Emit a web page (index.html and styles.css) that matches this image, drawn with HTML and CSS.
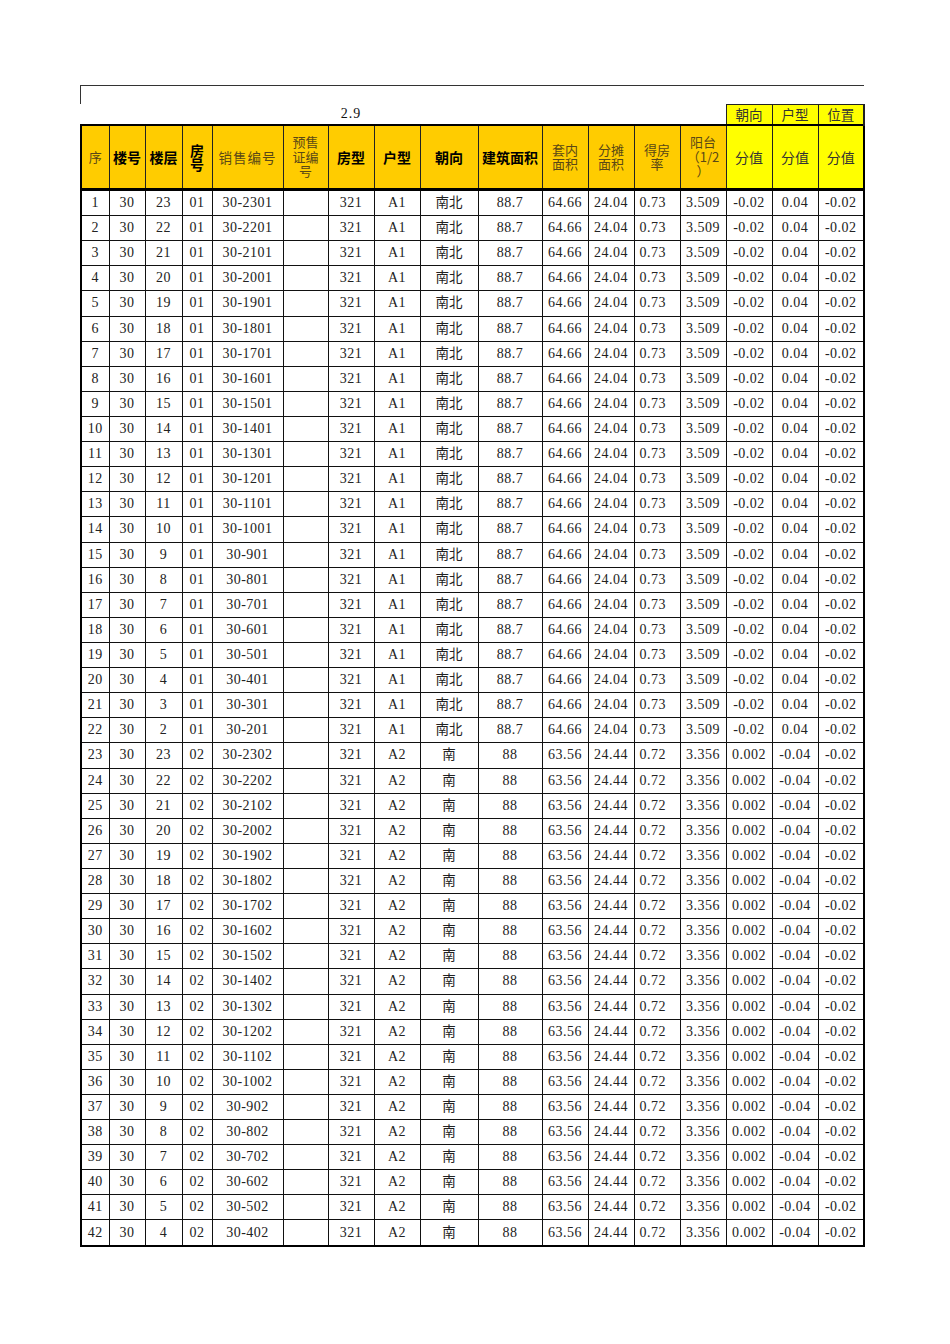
FILE: index.html
```html
<!DOCTYPE html>
<html lang="zh-CN">
<head>
<meta charset="utf-8">
<title>销售表</title>
<link rel="stylesheet" href="styles.css">
</head>
<body>
<div class="page">
  <div class="title-box"></div>
  <table class="sheet">
    <colgroup>
      <col class="c28"><col class="c36"><col class="c37"><col class="c30"><col class="c71"><col class="c45"><col class="c46"><col class="c46"><col class="c58"><col class="c64"><col class="c46"><col class="c46"><col class="c46"><col class="c46"><col class="c46"><col class="c46"><col class="c46">
    </colgroup>
    <thead>
      <tr class="pre">
        <td></td><td></td><td></td><td></td><td></td><td></td><td class="ratio">2.9</td><td></td><td></td><td></td><td></td><td></td><td></td><td></td>
        <td class="ylw">朝向</td><td class="ylw">户型</td><td class="ylw last">位置</td>
      </tr>
      <tr class="head">
        <th class="lt first">序</th>
        <th class="bd">楼号</th>
        <th class="bd">楼层</th>
        <th class="bd">房<br>号</th>
        <th class="lt sp">销售编号</th>
        <th class="lt">预售<br>证编<br>号</th>
        <th class="bd">房型</th>
        <th class="bd">户型</th>
        <th class="bd">朝向</th>
        <th class="bd">建筑面积</th>
        <th class="lt">套内<br>面积</th>
        <th class="lt">分摊<br>面积</th>
        <th class="lt">得房<br>率</th>
        <th class="lt">阳台<br>（1/2<br>）</th>
        <th class="lt y">分值</th>
        <th class="lt y">分值</th>
        <th class="lt y last">分值</th>
      </tr>
    </thead>
    <tbody>
      <tr><td class="first">1</td><td>30</td><td>23</td><td>01</td><td>30-2301</td><td></td><td>321</td><td>A1</td><td class="cj">南北</td><td>88.7</td><td>64.66</td><td>24.04</td><td class="l">0.73</td><td>3.509</td><td>-0.02</td><td>0.04</td><td class="last">-0.02</td></tr>
      <tr><td class="first">2</td><td>30</td><td>22</td><td>01</td><td>30-2201</td><td></td><td>321</td><td>A1</td><td class="cj">南北</td><td>88.7</td><td>64.66</td><td>24.04</td><td class="l">0.73</td><td>3.509</td><td>-0.02</td><td>0.04</td><td class="last">-0.02</td></tr>
      <tr><td class="first">3</td><td>30</td><td>21</td><td>01</td><td>30-2101</td><td></td><td>321</td><td>A1</td><td class="cj">南北</td><td>88.7</td><td>64.66</td><td>24.04</td><td class="l">0.73</td><td>3.509</td><td>-0.02</td><td>0.04</td><td class="last">-0.02</td></tr>
      <tr><td class="first">4</td><td>30</td><td>20</td><td>01</td><td>30-2001</td><td></td><td>321</td><td>A1</td><td class="cj">南北</td><td>88.7</td><td>64.66</td><td>24.04</td><td class="l">0.73</td><td>3.509</td><td>-0.02</td><td>0.04</td><td class="last">-0.02</td></tr>
      <tr><td class="first">5</td><td>30</td><td>19</td><td>01</td><td>30-1901</td><td></td><td>321</td><td>A1</td><td class="cj">南北</td><td>88.7</td><td>64.66</td><td>24.04</td><td class="l">0.73</td><td>3.509</td><td>-0.02</td><td>0.04</td><td class="last">-0.02</td></tr>
      <tr><td class="first">6</td><td>30</td><td>18</td><td>01</td><td>30-1801</td><td></td><td>321</td><td>A1</td><td class="cj">南北</td><td>88.7</td><td>64.66</td><td>24.04</td><td class="l">0.73</td><td>3.509</td><td>-0.02</td><td>0.04</td><td class="last">-0.02</td></tr>
      <tr><td class="first">7</td><td>30</td><td>17</td><td>01</td><td>30-1701</td><td></td><td>321</td><td>A1</td><td class="cj">南北</td><td>88.7</td><td>64.66</td><td>24.04</td><td class="l">0.73</td><td>3.509</td><td>-0.02</td><td>0.04</td><td class="last">-0.02</td></tr>
      <tr><td class="first">8</td><td>30</td><td>16</td><td>01</td><td>30-1601</td><td></td><td>321</td><td>A1</td><td class="cj">南北</td><td>88.7</td><td>64.66</td><td>24.04</td><td class="l">0.73</td><td>3.509</td><td>-0.02</td><td>0.04</td><td class="last">-0.02</td></tr>
      <tr><td class="first">9</td><td>30</td><td>15</td><td>01</td><td>30-1501</td><td></td><td>321</td><td>A1</td><td class="cj">南北</td><td>88.7</td><td>64.66</td><td>24.04</td><td class="l">0.73</td><td>3.509</td><td>-0.02</td><td>0.04</td><td class="last">-0.02</td></tr>
      <tr><td class="first">10</td><td>30</td><td>14</td><td>01</td><td>30-1401</td><td></td><td>321</td><td>A1</td><td class="cj">南北</td><td>88.7</td><td>64.66</td><td>24.04</td><td class="l">0.73</td><td>3.509</td><td>-0.02</td><td>0.04</td><td class="last">-0.02</td></tr>
      <tr><td class="first">11</td><td>30</td><td>13</td><td>01</td><td>30-1301</td><td></td><td>321</td><td>A1</td><td class="cj">南北</td><td>88.7</td><td>64.66</td><td>24.04</td><td class="l">0.73</td><td>3.509</td><td>-0.02</td><td>0.04</td><td class="last">-0.02</td></tr>
      <tr><td class="first">12</td><td>30</td><td>12</td><td>01</td><td>30-1201</td><td></td><td>321</td><td>A1</td><td class="cj">南北</td><td>88.7</td><td>64.66</td><td>24.04</td><td class="l">0.73</td><td>3.509</td><td>-0.02</td><td>0.04</td><td class="last">-0.02</td></tr>
      <tr><td class="first">13</td><td>30</td><td>11</td><td>01</td><td>30-1101</td><td></td><td>321</td><td>A1</td><td class="cj">南北</td><td>88.7</td><td>64.66</td><td>24.04</td><td class="l">0.73</td><td>3.509</td><td>-0.02</td><td>0.04</td><td class="last">-0.02</td></tr>
      <tr><td class="first">14</td><td>30</td><td>10</td><td>01</td><td>30-1001</td><td></td><td>321</td><td>A1</td><td class="cj">南北</td><td>88.7</td><td>64.66</td><td>24.04</td><td class="l">0.73</td><td>3.509</td><td>-0.02</td><td>0.04</td><td class="last">-0.02</td></tr>
      <tr><td class="first">15</td><td>30</td><td>9</td><td>01</td><td>30-901</td><td></td><td>321</td><td>A1</td><td class="cj">南北</td><td>88.7</td><td>64.66</td><td>24.04</td><td class="l">0.73</td><td>3.509</td><td>-0.02</td><td>0.04</td><td class="last">-0.02</td></tr>
      <tr><td class="first">16</td><td>30</td><td>8</td><td>01</td><td>30-801</td><td></td><td>321</td><td>A1</td><td class="cj">南北</td><td>88.7</td><td>64.66</td><td>24.04</td><td class="l">0.73</td><td>3.509</td><td>-0.02</td><td>0.04</td><td class="last">-0.02</td></tr>
      <tr><td class="first">17</td><td>30</td><td>7</td><td>01</td><td>30-701</td><td></td><td>321</td><td>A1</td><td class="cj">南北</td><td>88.7</td><td>64.66</td><td>24.04</td><td class="l">0.73</td><td>3.509</td><td>-0.02</td><td>0.04</td><td class="last">-0.02</td></tr>
      <tr><td class="first">18</td><td>30</td><td>6</td><td>01</td><td>30-601</td><td></td><td>321</td><td>A1</td><td class="cj">南北</td><td>88.7</td><td>64.66</td><td>24.04</td><td class="l">0.73</td><td>3.509</td><td>-0.02</td><td>0.04</td><td class="last">-0.02</td></tr>
      <tr><td class="first">19</td><td>30</td><td>5</td><td>01</td><td>30-501</td><td></td><td>321</td><td>A1</td><td class="cj">南北</td><td>88.7</td><td>64.66</td><td>24.04</td><td class="l">0.73</td><td>3.509</td><td>-0.02</td><td>0.04</td><td class="last">-0.02</td></tr>
      <tr><td class="first">20</td><td>30</td><td>4</td><td>01</td><td>30-401</td><td></td><td>321</td><td>A1</td><td class="cj">南北</td><td>88.7</td><td>64.66</td><td>24.04</td><td class="l">0.73</td><td>3.509</td><td>-0.02</td><td>0.04</td><td class="last">-0.02</td></tr>
      <tr><td class="first">21</td><td>30</td><td>3</td><td>01</td><td>30-301</td><td></td><td>321</td><td>A1</td><td class="cj">南北</td><td>88.7</td><td>64.66</td><td>24.04</td><td class="l">0.73</td><td>3.509</td><td>-0.02</td><td>0.04</td><td class="last">-0.02</td></tr>
      <tr><td class="first">22</td><td>30</td><td>2</td><td>01</td><td>30-201</td><td></td><td>321</td><td>A1</td><td class="cj">南北</td><td>88.7</td><td>64.66</td><td>24.04</td><td class="l">0.73</td><td>3.509</td><td>-0.02</td><td>0.04</td><td class="last">-0.02</td></tr>
      <tr><td class="first">23</td><td>30</td><td>23</td><td>02</td><td>30-2302</td><td></td><td>321</td><td>A2</td><td class="cj">南</td><td>88</td><td>63.56</td><td>24.44</td><td class="l">0.72</td><td>3.356</td><td>0.002</td><td>-0.04</td><td class="last">-0.02</td></tr>
      <tr><td class="first">24</td><td>30</td><td>22</td><td>02</td><td>30-2202</td><td></td><td>321</td><td>A2</td><td class="cj">南</td><td>88</td><td>63.56</td><td>24.44</td><td class="l">0.72</td><td>3.356</td><td>0.002</td><td>-0.04</td><td class="last">-0.02</td></tr>
      <tr><td class="first">25</td><td>30</td><td>21</td><td>02</td><td>30-2102</td><td></td><td>321</td><td>A2</td><td class="cj">南</td><td>88</td><td>63.56</td><td>24.44</td><td class="l">0.72</td><td>3.356</td><td>0.002</td><td>-0.04</td><td class="last">-0.02</td></tr>
      <tr><td class="first">26</td><td>30</td><td>20</td><td>02</td><td>30-2002</td><td></td><td>321</td><td>A2</td><td class="cj">南</td><td>88</td><td>63.56</td><td>24.44</td><td class="l">0.72</td><td>3.356</td><td>0.002</td><td>-0.04</td><td class="last">-0.02</td></tr>
      <tr><td class="first">27</td><td>30</td><td>19</td><td>02</td><td>30-1902</td><td></td><td>321</td><td>A2</td><td class="cj">南</td><td>88</td><td>63.56</td><td>24.44</td><td class="l">0.72</td><td>3.356</td><td>0.002</td><td>-0.04</td><td class="last">-0.02</td></tr>
      <tr><td class="first">28</td><td>30</td><td>18</td><td>02</td><td>30-1802</td><td></td><td>321</td><td>A2</td><td class="cj">南</td><td>88</td><td>63.56</td><td>24.44</td><td class="l">0.72</td><td>3.356</td><td>0.002</td><td>-0.04</td><td class="last">-0.02</td></tr>
      <tr><td class="first">29</td><td>30</td><td>17</td><td>02</td><td>30-1702</td><td></td><td>321</td><td>A2</td><td class="cj">南</td><td>88</td><td>63.56</td><td>24.44</td><td class="l">0.72</td><td>3.356</td><td>0.002</td><td>-0.04</td><td class="last">-0.02</td></tr>
      <tr><td class="first">30</td><td>30</td><td>16</td><td>02</td><td>30-1602</td><td></td><td>321</td><td>A2</td><td class="cj">南</td><td>88</td><td>63.56</td><td>24.44</td><td class="l">0.72</td><td>3.356</td><td>0.002</td><td>-0.04</td><td class="last">-0.02</td></tr>
      <tr><td class="first">31</td><td>30</td><td>15</td><td>02</td><td>30-1502</td><td></td><td>321</td><td>A2</td><td class="cj">南</td><td>88</td><td>63.56</td><td>24.44</td><td class="l">0.72</td><td>3.356</td><td>0.002</td><td>-0.04</td><td class="last">-0.02</td></tr>
      <tr><td class="first">32</td><td>30</td><td>14</td><td>02</td><td>30-1402</td><td></td><td>321</td><td>A2</td><td class="cj">南</td><td>88</td><td>63.56</td><td>24.44</td><td class="l">0.72</td><td>3.356</td><td>0.002</td><td>-0.04</td><td class="last">-0.02</td></tr>
      <tr><td class="first">33</td><td>30</td><td>13</td><td>02</td><td>30-1302</td><td></td><td>321</td><td>A2</td><td class="cj">南</td><td>88</td><td>63.56</td><td>24.44</td><td class="l">0.72</td><td>3.356</td><td>0.002</td><td>-0.04</td><td class="last">-0.02</td></tr>
      <tr><td class="first">34</td><td>30</td><td>12</td><td>02</td><td>30-1202</td><td></td><td>321</td><td>A2</td><td class="cj">南</td><td>88</td><td>63.56</td><td>24.44</td><td class="l">0.72</td><td>3.356</td><td>0.002</td><td>-0.04</td><td class="last">-0.02</td></tr>
      <tr><td class="first">35</td><td>30</td><td>11</td><td>02</td><td>30-1102</td><td></td><td>321</td><td>A2</td><td class="cj">南</td><td>88</td><td>63.56</td><td>24.44</td><td class="l">0.72</td><td>3.356</td><td>0.002</td><td>-0.04</td><td class="last">-0.02</td></tr>
      <tr><td class="first">36</td><td>30</td><td>10</td><td>02</td><td>30-1002</td><td></td><td>321</td><td>A2</td><td class="cj">南</td><td>88</td><td>63.56</td><td>24.44</td><td class="l">0.72</td><td>3.356</td><td>0.002</td><td>-0.04</td><td class="last">-0.02</td></tr>
      <tr><td class="first">37</td><td>30</td><td>9</td><td>02</td><td>30-902</td><td></td><td>321</td><td>A2</td><td class="cj">南</td><td>88</td><td>63.56</td><td>24.44</td><td class="l">0.72</td><td>3.356</td><td>0.002</td><td>-0.04</td><td class="last">-0.02</td></tr>
      <tr><td class="first">38</td><td>30</td><td>8</td><td>02</td><td>30-802</td><td></td><td>321</td><td>A2</td><td class="cj">南</td><td>88</td><td>63.56</td><td>24.44</td><td class="l">0.72</td><td>3.356</td><td>0.002</td><td>-0.04</td><td class="last">-0.02</td></tr>
      <tr><td class="first">39</td><td>30</td><td>7</td><td>02</td><td>30-702</td><td></td><td>321</td><td>A2</td><td class="cj">南</td><td>88</td><td>63.56</td><td>24.44</td><td class="l">0.72</td><td>3.356</td><td>0.002</td><td>-0.04</td><td class="last">-0.02</td></tr>
      <tr><td class="first">40</td><td>30</td><td>6</td><td>02</td><td>30-602</td><td></td><td>321</td><td>A2</td><td class="cj">南</td><td>88</td><td>63.56</td><td>24.44</td><td class="l">0.72</td><td>3.356</td><td>0.002</td><td>-0.04</td><td class="last">-0.02</td></tr>
      <tr><td class="first">41</td><td>30</td><td>5</td><td>02</td><td>30-502</td><td></td><td>321</td><td>A2</td><td class="cj">南</td><td>88</td><td>63.56</td><td>24.44</td><td class="l">0.72</td><td>3.356</td><td>0.002</td><td>-0.04</td><td class="last">-0.02</td></tr>
      <tr><td class="first">42</td><td>30</td><td>4</td><td>02</td><td>30-402</td><td></td><td>321</td><td>A2</td><td class="cj">南</td><td>88</td><td>63.56</td><td>24.44</td><td class="l">0.72</td><td>3.356</td><td>0.002</td><td>-0.04</td><td class="last">-0.02</td></tr>
    </tbody>
  </table>
</div>
</body>
</html>
```

FILE: styles.css
```css
html, body {
  margin: 0;
  padding: 0;
  background: #fff;
}

.page {
  padding: 85px 0 0 80px;
  font-family: "Liberation Serif", "Noto Sans CJK SC", serif;
  color: #111;
}

.title-box {
  width: 783px;
  height: 18px;
  border-top: 1px solid #333;
  border-left: 1px solid #333;
}

.sheet {
  border-collapse: collapse;
  table-layout: fixed;
  width: 785px;
  font-size: 14px;
}

.c28 { width: 28px; }
.c30 { width: 30px; }
.c36 { width: 36px; }
.c37 { width: 37px; }
.c45 { width: 45px; }
.c46 { width: 46px; }
.c58 { width: 58px; }
.c64 { width: 64px; }
.c71 { width: 71px; }

.sheet td,
.sheet th {
  padding: 0;
  text-align: center;
  vertical-align: middle;
  white-space: nowrap;
  overflow: hidden;
}

/* pre-header row */
.pre td {
  height: 19px;
  border: none;
  line-height: 18px;
}
.pre .ratio {
  text-align: center;
  letter-spacing: 1px;
}
.pre .ylw {
  height: 17px;
  padding-bottom: 2px;
  background: #ffff00;
  border: 1px solid #222;
  font-family: "Noto Sans CJK SC", sans-serif;
  font-weight: 400;
  font-size: 13.5px;
  line-height: 16px;
  color: #333;
}
.pre .last {
  border-right: 2px solid #222;
}

/* header row */
.head th {
  height: 62px;
  background: #ffcc00;
  border: 1px solid #222;
  border-top: 2px solid #000;
  border-bottom: 3px solid #000;
  font-family: "Noto Sans CJK SC", sans-serif;
  font-size: 13px;
  line-height: 14.5px;
}
.head .bd {
  font-weight: 700;
  font-size: 14px;
  color: #000;
}
.head .lt {
  font-weight: 400;
  color: #5a4816;
}
.head .sp {
  letter-spacing: 1px;
  font-size: 13.5px;
}
.head .y {
  background: #ffff00;
  color: #333;
  font-size: 14px;
}
.head .first {
  border-left: 2px solid #000;
}
.head .last {
  border-right: 2px solid #000;
}

/* body rows */
.sheet tbody td {
  height: 24.12px;
  border: 1px solid #111;
  line-height: 16px;
  letter-spacing: 0.5px;
  color: #222;
}
.sheet tbody td.cj {
  height: 20.12px;
  font-family: "Noto Sans CJK SC", sans-serif;
  font-weight: 400;
  font-size: 13.5px;
  letter-spacing: 0;
  padding-bottom: 4px;
}
.sheet tbody td.l {
  text-align: left;
  padding-left: 5px;
}
.sheet tbody td.first {
  border-left: 2px solid #000;
}
.sheet tbody td.last {
  border-right: 2px solid #000;
}
.sheet tbody tr:last-child td {
  border-bottom: 2px solid #000;
}
```
